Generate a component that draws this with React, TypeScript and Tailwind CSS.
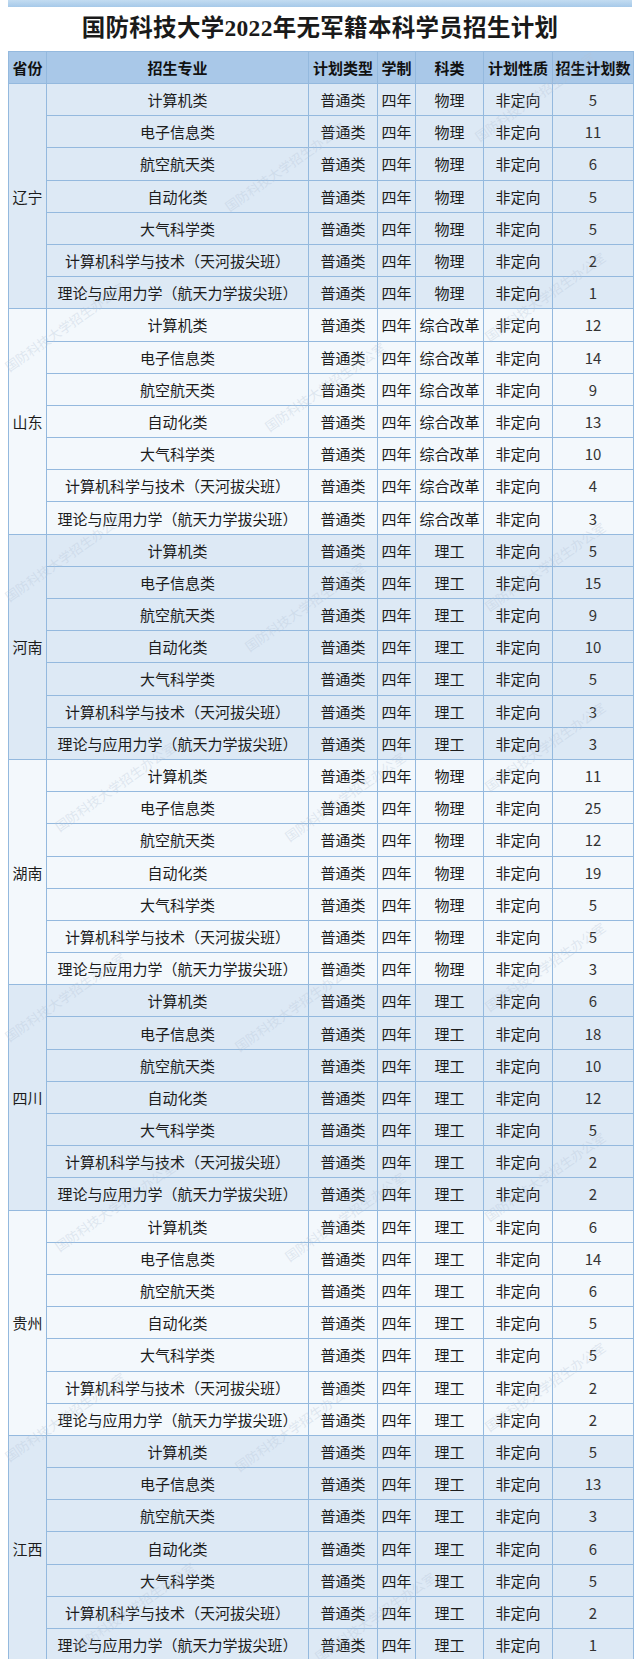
import React from 'react';

const majors = [
  '计算机类',
  '电子信息类',
  '航空航天类',
  '自动化类',
  '大气科学类',
  '计算机科学与技术（天河拔尖班）',
  '理论与应用力学（航天力学拔尖班）',
];

const provinces = [
  { name: '辽宁', subject: '物理', counts: [5, 11, 6, 5, 5, 2, 1] },
  { name: '山东', subject: '综合改革', counts: [12, 14, 9, 13, 10, 4, 3] },
  { name: '河南', subject: '理工', counts: [5, 15, 9, 10, 5, 3, 3] },
  { name: '湖南', subject: '物理', counts: [11, 25, 12, 19, 5, 5, 3] },
  { name: '四川', subject: '理工', counts: [6, 18, 10, 12, 5, 2, 2] },
  { name: '贵州', subject: '理工', counts: [6, 14, 6, 5, 5, 2, 2] },
  { name: '江西', subject: '理工', counts: [5, 13, 3, 6, 5, 2, 1] },
];

// faint diagonal watermark positions (left, top)
const marks = [
  [230, 200], [480, 130],
  [10, 360], [270, 420], [490, 330],
  [10, 590], [250, 640], [490, 600],
  [60, 820], [290, 830], [490, 780],
  [10, 1030], [240, 1040], [490, 1000],
  [60, 1240], [290, 1250], [490, 1210],
  [10, 1450], [240, 1460], [490, 1420],
  [80, 1640], [320, 1650],
];

const cell = 'border border-[#94b9de] text-center align-middle p-0 whitespace-nowrap';

export default function App() {
  return (
    <div className="relative h-[1659px] overflow-hidden bg-white text-[#1c1c1c] font-['Noto_Sans_CJK_SC','Noto_Sans',sans-serif]">
      {/* top strip */}
      <div className="mx-[8px] h-[7px] bg-gradient-to-b from-[#c3dcf1] to-[#a6c9e9]" />

      {/* title */}
      <h1 className="h-[44px] flex items-center justify-center text-[23.5px] font-bold tracking-[0.3px] text-[#1a1a1a] font-['Liberation_Serif','Noto_Sans_CJK_SC',serif]">
        国防科技大学2022年无军籍本科学员招生计划
      </h1>

      <table className="ml-[8px] w-[625px] border-collapse table-fixed text-[15px] leading-none">
        <colgroup>
          <col className="w-[38px]" />
          <col className="w-[262px]" />
          <col className="w-[69px]" />
          <col className="w-[38px]" />
          <col className="w-[68px]" />
          <col className="w-[69px]" />
          <col className="w-[81px]" />
        </colgroup>
        <thead>
          <tr className="h-[32px] bg-[#a9c8e8] font-bold text-[#111]">
            <th className={cell}>省份</th>
            <th className={cell}>招生专业</th>
            <th className={cell}>计划类型</th>
            <th className={cell}>学制</th>
            <th className={cell}>科类</th>
            <th className={cell}>计划性质</th>
            <th className={cell}>招生计划数</th>
          </tr>
        </thead>
        <tbody>
          {provinces.map((p, gi) => {
            const bg = gi % 2 === 0 ? 'bg-[#dde9f5]' : 'bg-[#f3f8fc]';
            return majors.map((m, i) => (
              <tr key={p.name + i} className={`h-[32.2px] ${bg}`}>
                {i === 0 && (
                  <td rowSpan={7} className={cell}>
                    {p.name}
                  </td>
                )}
                <td className={cell}>{m}</td>
                <td className={cell}>普通类</td>
                <td className={cell}>四年</td>
                <td className={cell}>{p.subject}</td>
                <td className={cell}>非定向</td>
                <td className={`${cell} text-[#333]`}>{p.counts[i]}</td>
              </tr>
            ));
          })}
        </tbody>
      </table>

      {/* watermark overlay */}
      <div className="pointer-events-none absolute inset-0">
        {marks.map(([x, y], k) => (
          <span
            key={k}
            className="absolute -rotate-[35deg] origin-bottom-left text-[13px] leading-none text-[#b4c4d6]/35 whitespace-nowrap"
            style={{ left: x, top: y }}
          >
            国防科技大学招生办公室
          </span>
        ))}
      </div>
    </div>
  );
}
